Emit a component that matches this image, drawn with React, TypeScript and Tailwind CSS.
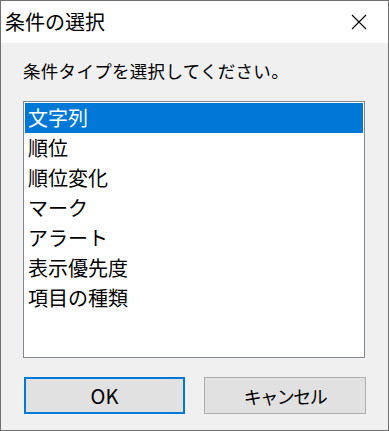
import React, { useState } from 'react'

const items = ['文字列', '順位', '順位変化', 'マーク', 'アラート', '表示優先度', '項目の種類']

export default function App() {
  const [selected, setSelected] = useState(0)

  return (
    <div
      className="w-[389px] h-[431px] border border-[#707070] bg-[#f0f0f0] flex flex-col text-black"
      style={{ fontFamily: '"Noto Sans CJK JP", "Noto Sans", sans-serif' }}
    >
      {/* title bar */}
      <div className="h-[42px] bg-white flex items-center justify-between pl-[4px] pr-[20px]">
        <span className="text-[20px] leading-none">条件の選択</span>
        <svg width="16" height="16" viewBox="0 0 16 16" className="mr-[1px]">
          <path d="M1 1 L15 15 M15 1 L1 15" stroke="#000" strokeWidth="1.1" fill="none" />
        </svg>
      </div>

      <div className="flex-1 flex flex-col px-[22px]">
        <p className="mt-[16px] text-[17.5px] leading-[24px] tracking-[0.3px]">条件タイプを選択してください。</p>

        <div className="mt-[18px] w-[342px] h-[257px] border border-[#828790] bg-white p-[1px]">
          {items.map((item, i) => (
            <div
              key={item}
              onClick={() => setSelected(i)}
              className={`h-[30px] flex items-center pl-[3px] text-[20px] ${
                selected === i ? 'bg-[#0078d7] text-white' : ''
              }`}
            >
              {item}
            </div>
          ))}
        </div>

        <div className="mt-[19px] flex gap-[19px] pl-[1px]">
          <button className="w-[161px] h-[37px] border-2 border-[#0078d7] bg-[#e1e1e1] text-[20px] leading-none">
            OK
          </button>
          <button className="w-[162px] h-[37px] border border-[#adadad] bg-[#e1e1e1] text-[18px] leading-none tracking-[-1.5px]">
            キャンセル
          </button>
        </div>
      </div>
    </div>
  )
}
